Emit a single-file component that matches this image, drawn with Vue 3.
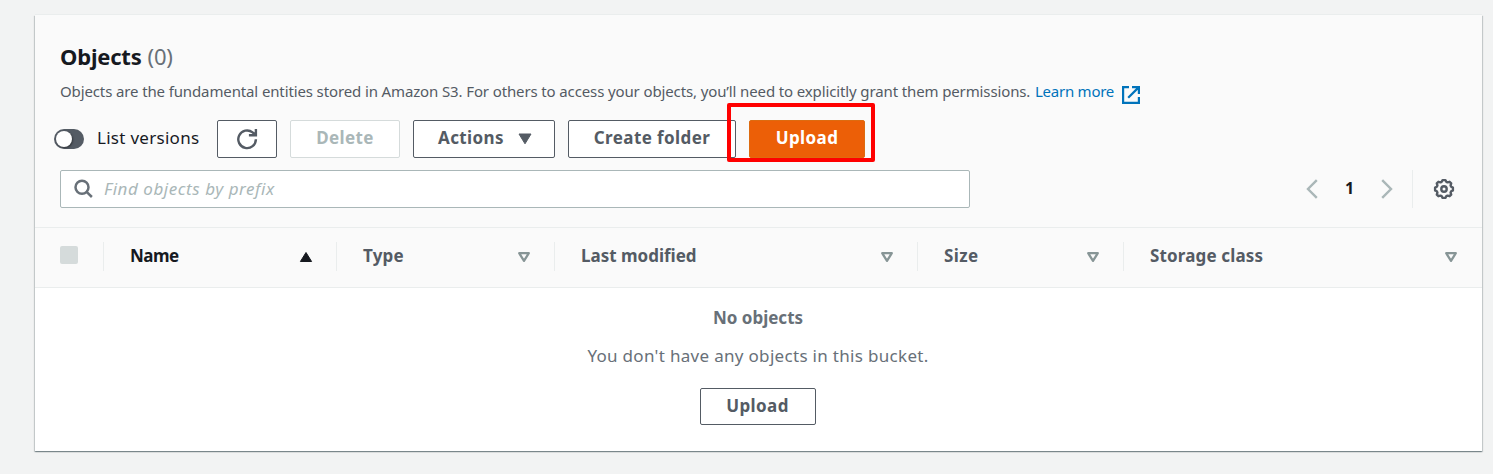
<script setup>
const columns = [
  { key: 'name', label: 'Name', sorted: true },
  { key: 'type', label: 'Type' },
  { key: 'modified', label: 'Last modified' },
  { key: 'size', label: 'Size' },
  { key: 'storage', label: 'Storage class' },
]
</script>

<template>
  <main class="page">
    <section class="card">
      <header class="head">
        <h2 class="title"><span class="title-text">Objects</span><span class="count">(0)</span></h2>
        <p class="desc">
          <span class="desc-text">Objects are the fundamental entities stored in Amazon S3. For others to access your objects, you’ll need to explicitly grant them permissions.</span>
          <a class="learn">Learn more</a>
          <svg class="external" width="18" height="18" viewBox="0 0 18 18" fill="none" stroke="#0073bb" stroke-width="2.2">
            <path d="M7 1.1H1.1v15.8h15.8V11M10 1.1h6.9V8M16.6 1.4L6.2 11.8" />
          </svg>
        </p>
        <div class="actions">
          <span class="toggle"><span class="knob"></span></span>
          <span class="toggle-label">List versions</span>
          <button class="btn refresh" aria-label="Refresh">
            <svg width="22" height="22" viewBox="0 0 22 22" fill="none" stroke="#545b64" stroke-width="2.4">
              <path d="M19.9 11.2A8.8 8.8 0 1 1 16.6 4.4l2.4 2.2" />
              <path d="M19.9 1v6.3h-7" />
              <path d="M15.5 7.3L19.9 3v4.3z" fill="#545b64" stroke="none" />
            </svg>
          </button>
          <button class="btn delete">Delete</button>
          <button class="btn menu">
            <span>Actions</span>
            <svg width="14" height="12" viewBox="0 0 14 12"><path d="M1 1h12L7 10.8z" fill="#545b64" stroke="#545b64" stroke-linejoin="round" /></svg>
          </button>
          <button class="btn create">Create folder</button>
          <span class="primary-wrap">
            <button class="btn primary">Upload</button>
            <span class="highlight"></span>
          </span>
        </div>
        <div class="filter">
          <div class="search">
            <svg width="20" height="20" viewBox="0 0 20 20" fill="none" stroke="#687078" stroke-width="2.5">
              <circle cx="8" cy="8.2" r="6.5" /><path d="M12.6 12.8l5.3 5.2" />
            </svg>
            <span class="placeholder">Find objects by prefix</span>
          </div>
          <div class="pager">
            <svg width="12" height="20" viewBox="0 0 12 20" fill="none" stroke="#aab7b8" stroke-width="2.4"><path d="M10.8 1.2L2 10l8.8 8.8" /></svg>
            <span class="page-number">1</span>
            <svg width="12" height="20" viewBox="0 0 12 20" fill="none" stroke="#aab7b8" stroke-width="2.4"><path d="M1.2 1.2L10 10l-8.8 8.8" /></svg>
            <span class="rule"></span>
            <svg width="22" height="22" viewBox="0 0 22 22" fill="none" stroke="#545b64" stroke-width="2.4" stroke-linejoin="round">
              <path d="M9.6 2.1h2.8l.9 1.7 1.3.6 2-.6 1.6 1.6-.6 2 .6 1.3 1.7.9v2.8l-1.7.9-.6 1.3.6 2-1.6 1.6-2-.6-1.3.6-.9 1.7H9.6l-.9-1.7-1.3-.6-2 .6-1.6-1.6.6-2-.6-1.3-1.7-.9V9.6l1.7-.9.6-1.3-.6-2 1.6-1.6 2 .6 1.3-.6z" />
              <circle cx="11" cy="11" r="2.7" />
            </svg>
          </div>
        </div>
      </header>

      <div class="thead">
        <div class="th check"><span class="checkbox"></span></div>
        <div v-for="c in columns" :key="c.key" class="th" :class="[c.key, { sorted: c.sorted }]">
          <span class="label">{{ c.label }}</span>
          <svg v-if="c.sorted" width="14" height="12" viewBox="0 0 14 12"><path d="M7 1.5l5.6 9H1.4z" fill="#16191f" stroke="#16191f" stroke-linejoin="round" /></svg>
          <svg v-else width="14" height="12" viewBox="0 0 14 12"><path d="M2.2 2.2h9.6L7 9.8z" fill="none" stroke="#879596" stroke-width="2.3" stroke-linejoin="round" /></svg>
        </div>
      </div>

      <div class="empty">
        <strong class="empty-title">No objects</strong>
        <p class="empty-text">You don't have any objects in this bucket.</p>
        <button class="btn empty-upload">Upload</button>
      </div>
    </section>
  </main>
</template>

<style>
body { background: #f2f3f3; overflow: hidden; }
</style>

<style scoped>
* { box-sizing: border-box; }
.page {
  height: 474px;
  padding: 15px 11px 0 35px;
  background: #f2f3f3;
  font-family: "Noto Sans", "Open Sans", sans-serif;
  font-size: 17px;
  color: #16191f;
  white-space: nowrap;
}
svg { flex: none; display: block; }
.card {
  height: 436px;
  background: #fff;
  box-shadow: 0 1px 1px 0 rgba(0, 28, 36, .3), 1px 1px 1px 0 rgba(0, 28, 36, .15), -1px 1px 1px 0 rgba(0, 28, 36, .15), 0 -1px 0 0 #eaeded;
}
.head { height: 213px; padding: 26px 25px 0; background: #fafafa; border-bottom: 1px solid #eaeded; }
.title { margin: 0; height: 30px; line-height: 30px; font-size: 22px; display: flex; gap: 6px; }
.title-text { letter-spacing: -.2px; }
.count { font-weight: 400; color: #687078; letter-spacing: -.2px; }
.desc { margin: 8px 0 0; height: 24px; line-height: 24px; font-size: 15px; color: #545b64; display: flex; }
.desc-text { letter-spacing: -.125px; width: 975px; }
.learn { color: #0073bb; width: 87px; letter-spacing: -.25px; }
.external { margin-top: 7px; }
.actions { margin: 17px 0 0 -6px; display: flex; align-items: center; height: 38px; }
.toggle { width: 30px; height: 20px; border-radius: 10px; background: #545b64; padding: 2px; }
.knob { display: block; width: 16px; height: 16px; border-radius: 50%; background: #fff; box-shadow: 1px 1px 2px rgba(0, 0, 0, .4); }
.toggle-label { margin: -3px 0 0 13px; width: 120px; letter-spacing: .28px; }
.btn {
  height: 38px;
  margin: 0 13px 0 0;
  padding: 0 0 2px;
  display: flex;
  align-items: center;
  justify-content: center;
  flex: none;
  border: 1px solid #545b64;
  border-radius: 2px;
  background: #fff;
  color: #545b64;
  font: 700 17px/34px "Noto Sans", "Open Sans", sans-serif;
  letter-spacing: .4px;
}
.refresh { width: 60px; padding: 0; }
.delete { width: 110px; border-color: #d5dbdb; color: #aab7b8; }
.menu { width: 142px; gap: 14px; padding-left: 2px; }
.menu svg { margin-top: 2px; }
.create { width: 168px; }
.primary-wrap { position: relative; }
.primary { width: 116px; margin: 0; background: #ec5f07; border-color: #dd6b10; color: #fff; }
.highlight { position: absolute; left: -22px; top: -17px; width: 148px; height: 59px; border: 4px solid #f00; border-radius: 2px; }
.filter { margin-top: 12px; display: flex; justify-content: space-between; }
.search { width: 910px; height: 38px; border: 1px solid #aab7b8; border-radius: 2px; background: #fff; display: flex; align-items: center; padding-left: 13px; }
.placeholder { margin: -2px 0 0 10px; font-style: italic; color: #aab7b8; letter-spacing: .55px; }
.pager { display: flex; align-items: center; height: 38px; padding-right: 2px; }
.page-number { width: 63px; margin-top: -2px; text-align: center; font-weight: 700; font-size: 16px; }
.rule { width: 1px; height: 38px; background: #eaeded; margin: 0 20px 0 19px; }
.thead { display: grid; grid-template-columns: 69px 233px 218px 363px 206px 1fr; height: 60px; align-items: center; background: #fafafa; border-bottom: 1px solid #eaeded; }
.th { height: 29px; margin-top: -2px; padding: 0 23px 0 26px; border-right: 1px solid #eaeded; display: flex; align-items: center; justify-content: space-between; font-weight: 700; color: #545b64; }
.th svg { margin-top: 1px; }
.th.sorted { color: #16191f; }
.th.check { padding-left: 25px; }
.th.storage { border-right: 0; padding-right: 24px; }
.checkbox { width: 18px; height: 18px; margin-bottom: 3px; border-radius: 2px; background: #d5dbdb; }
.label { margin-top: -2px; }
.name .label { letter-spacing: -.5px; }
.storage .label { letter-spacing: .15px; }
.type .label { letter-spacing: .2px; }
.size .label { letter-spacing: .4px; }
.empty { display: flex; flex-direction: column; align-items: center; padding: 17px 1px 0 0; color: #687078; }
.empty-title { line-height: 26px; }
.empty-text { margin: 12px 0 19px; line-height: 26px; letter-spacing: .31px; }
.empty-upload { height: 37px; width: 116px; margin: 0 1px 0 0; padding-bottom: 1px; }
</style>
